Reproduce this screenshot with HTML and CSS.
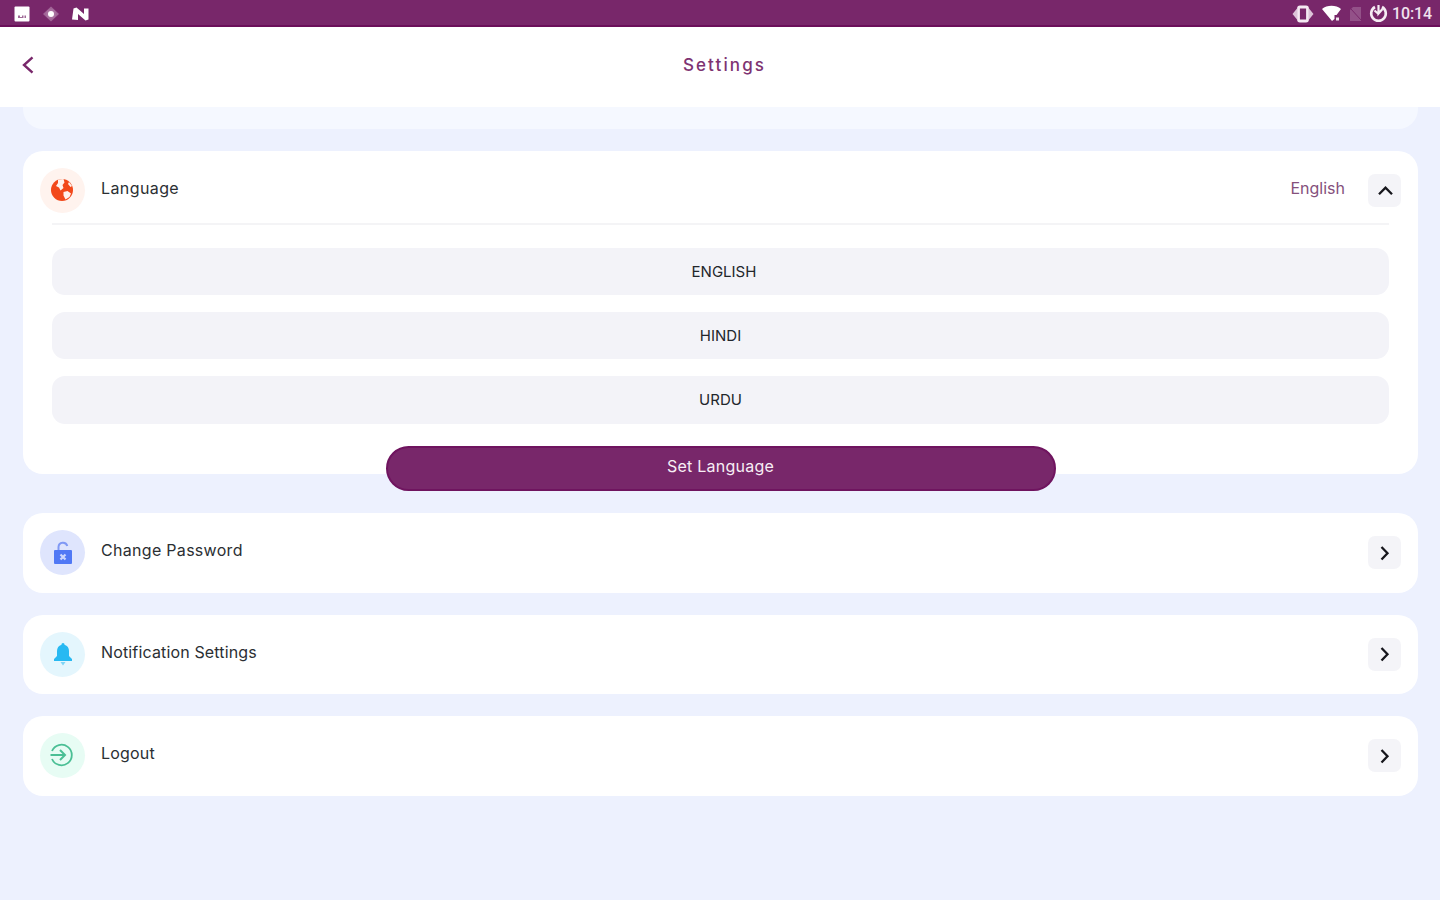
FILE: index.html
```html
<!DOCTYPE html>
<html lang="en">
<head>
    <meta charset="UTF-8">
    <meta name="viewport" content="width=device-width, initial-scale=1.0">
    <title>Settings</title>
    <link rel="stylesheet" href="styles.css">
</head>
<body>
    <!-- Status bar -->
    <div class="status-bar">
        <div class="status-left">
            <svg width="16" height="16" viewBox="0 0 16 16">
                <rect x="0.5" y="0.5" width="15" height="15" rx="1" fill="#fff"/>
                <path d="M4 12V9.500h2V11h2V9.500h1.500V12zM10.500 9.500h1.500V12h-1.500z" fill="#a06a97"/>
            </svg>
            <svg width="18" height="16" viewBox="0 0 18 16">
                <path d="M9 0.500L17 8 9 15.500 1 8z" fill="#c9a3c3" opacity="0.5"/>
                <circle cx="9" cy="8" r="5" fill="#a8709f"/>
                <circle cx="9" cy="8" r="3" fill="#fff"/>
            </svg>
            <svg width="18" height="16" viewBox="0 0 18 16">
                <path d="M0 13.500L1.500 2.500 4.500 1.500 12 8V2.500h4.500v11l-3 1L6 8v6z" fill="#fff"/>
            </svg>
        </div>
        <div class="status-right">
            <svg class="vibrate" width="22" height="18" viewBox="0 0 22 18">
                <path d="M5 3.500v11L.5 9zM17 3.500v11L21.500 9z" fill="#dcc3d8"/>
                <rect x="6.500" y="2" width="9" height="14" rx="1.500" fill="none" stroke="#f4e9f2" stroke-width="2.800"/>
            </svg>
            <svg class="wifi" width="21" height="18" viewBox="0 0 21 18">
                <path d="M1 4C6-.3 15-.3 20 4l-4.500 6h-2v4l-2.500 2z" fill="#fff"/>
                <rect x="15" y="12.500" width="3" height="3" fill="#f0e2ee"/>
            </svg>
            <svg class="sim" width="13" height="16" viewBox="0 0 13 16">
                <path d="M4 1h8v14H1V4z" fill="#935188"/>
                <path d="M2 3l10 11" stroke="#78276a" stroke-width="1"/>
            </svg>
            <svg class="sync" width="19" height="19" viewBox="0 0 19 19">
                <path d="M6 3A7.300 7.300 0 1 0 13 3" fill="none" stroke="#f6edf4" stroke-width="2.600"/>
                <path d="M9.500 1v8.500l4-4.500M5.500 6.500l3.500 3" fill="none" stroke="#f6edf4" stroke-width="2.200"/>
            </svg>
            <span class="clock">10:14</span>
        </div>
    </div>

    <!-- Header -->
    <header class="header">
        <svg class="back-icon" width="14" height="20" viewBox="0 0 14 20">
            <path d="M11.500 2.300L3 10l8.500 7.700" fill="none" stroke="#78276a" stroke-width="2.400"/>
        </svg>
        <h1 class="header-title">Settings</h1>
    </header>

    <main class="content">
        <div class="card-end"></div>

        <!-- Language -->
        <section class="card language-card">
            <div class="row">
                <span class="icon icon-language">
                    <svg width="24" height="24" viewBox="0 0 24 24">
                        <circle cx="12" cy="12" r="11" fill="#f2491b"/>
                        <path d="M8 1.500L13.500 1l1 3.500-2 2.500 1 3-3 2.500L9 9.500 6 8l2-3zM13.500 14l4-1 3.500 2.500-1.500 3.500-4 2.500-2-4zM19 4l3 4-1.500 1L18 6z" fill="#fff2ed"/>
                    </svg>
                </span>
                <span class="label label-language">Language</span>
                <span class="value">English</span>
                <span class="toggle">
                    <svg width="20" height="20" viewBox="0 0 20 20"><path d="M4 13.200l6.500-6.500 6.500 6.500" fill="none" stroke="#16161c" stroke-width="2.300"/></svg>
                </span>
            </div>
            <div class="options">
                <div class="option option-english">ENGLISH</div>
                <div class="option">HINDI</div>
                <div class="option">URDU</div>
            </div>
            <button class="set-button">Set Language</button>
        </section>

        <!-- Other settings -->
        <section class="card row">
            <span class="icon icon-password">
                <svg width="20" height="24" viewBox="0 0 20 24">
                    <path d="M5.500 9V6a4.500 4.500 0 0 1 8.800-1" fill="none" stroke="#8099f5" stroke-width="2"/>
                    <rect x="1" y="9" width="18" height="14" rx="1" fill="#5078f5"/>
                    <path d="M7.500 13.500l5 5M12.500 13.500l-5 5" stroke="#cbd6fd" stroke-width="2.200"/>
                </svg>
            </span>
            <span class="label label-password">Change Password</span>
            <span class="toggle">
                <svg width="20" height="20" viewBox="0 0 20 20"><path d="M6.500 4l6 6.200-6 6.300" fill="none" stroke="#16161c" stroke-width="2.300"/></svg>
            </span>
        </section>
        <section class="card row">
            <span class="icon icon-notification">
                <svg width="20" height="24" viewBox="0 0 20 24">
                    <path d="M10 1c1 0 1.500.8 1.500 1.700C14.500 3.500 16 6 16 9v5l3 3v2H1v-2l3-3V9c0-3 1.500-5.500 4.500-6.300C8.500 1.800 9 1 10 1z" fill="#27b9f2"/>
                    <path d="M7.500 20h5L10 23.500z" fill="#7fd5f6"/>
                </svg>
            </span>
            <span class="label label-notification">Notification Settings</span>
            <span class="toggle">
                <svg width="20" height="20" viewBox="0 0 20 20"><path d="M6.500 4l6 6.200-6 6.300" fill="none" stroke="#16161c" stroke-width="2.300"/></svg>
            </span>
        </section>
        <section class="card row">
            <span class="icon icon-logout">
                <svg width="24" height="24" viewBox="0 0 24 24" fill="none" stroke="#4bbf95">
                    <path d="M2 8A10.300 10.300 0 1 1 2 16" stroke-width="1.800"/>
                    <path d="M.5 12h14M10 7l5 5-5 5" stroke-width="2"/>
                </svg>
            </span>
            <span class="label label-logout">Logout</span>
            <span class="toggle">
                <svg width="20" height="20" viewBox="0 0 20 20"><path d="M6.500 4l6 6.200-6 6.300" fill="none" stroke="#16161c" stroke-width="2.300"/></svg>
            </span>
        </section>
    </main>
</body>
</html>
```
FILE: styles.css
```css
/* Reset */
* {
    box-sizing: border-box;
}

body {
    margin: 0;
    height: 100vh;
    overflow: hidden;
    background: #edf1fe;
    color: #2b2f33;
    font-family: Inter, "Open Sans", sans-serif;
}

svg {
    display: block;
    flex: none;
}

/* Status bar */
.status-bar {
    display: flex;
    justify-content: space-between;
    align-items: center;
    height: 27px;
    padding: 0 8px 0 14px;
    background: #78276a;
    border-bottom: 2px solid #6b0f5a;
}

.status-left {
    display: flex;
    gap: 12px;
    padding-top: 3px;
}

.status-right {
    display: flex;
    align-items: center;
    padding-top: 2px;
}

.wifi {
    margin-left: 7px;
}

.sim {
    margin-left: 7px;
}

.sync {
    margin-left: 7px;
}

.clock {
    margin-left: 4px;
    color: #f0e2ee;
    font-family: Roboto, sans-serif;
    font-size: 16px;
    font-weight: 500;
    line-height: 20px;
    letter-spacing: -0.1px;
}

/* Header */
.header {
    display: flex;
    align-items: center;
    height: 80px;
    padding: 0 21px;
    background: #fff;
}

.back-icon {
    margin-top: -4px;
}

.header-title {
    flex: 1;
    margin: -4px 5px 0 0;
    text-align: center;
    color: #7e3372;
    font-size: 17px;
    font-weight: 500;
    letter-spacing: 2.1px;
}

/* Cards */
.content {
    display: flex;
    flex-direction: column;
    gap: 22px;
    padding: 0 22px 0 23px;
}

.card-end {
    height: 22px;
    background: #f5f8ff;
    border-radius: 0 0 20px 20px;
}

.card {
    background: #fff;
    border-radius: 20px;
}

.row {
    display: flex;
    align-items: center;
    height: 79.500px;
    padding: 0 17px;
}

.icon {
    display: flex;
    justify-content: center;
    align-items: center;
    width: 45px;
    height: 45px;
    border-radius: 50%;
}

.icon-language {
    background: #fff3ee;
}

.icon-language svg,
.icon-logout svg {
    margin: 0 1px 1px 0;
}

.icon-password {
    background: #dfe5fd;
}

.icon-notification {
    background: #e4f6fd;
}

.icon-logout {
    background: #e7fcf4;
}

.label {
    flex: 1;
    margin: -5px 0 0 16px;
    font-size: 16px;
}

.label-language {
    letter-spacing: 0.4px;
}

.label-password {
    letter-spacing: 0.3px;
}

.label-notification {
    letter-spacing: 0.15px;
}

.label-logout {
    letter-spacing: 0.2px;
}

.value {
    margin: -5px 23px 0 0;
    color: #85507c;
    font-size: 16px;
}

.toggle {
    display: flex;
    justify-content: center;
    align-items: center;
    width: 33px;
    height: 33px;
    border-radius: 7px;
    background: #f4f4f8;
}

/* Language card */
.language-card {
    height: 323px;
    margin-bottom: 17px;
}

.options {
    display: flex;
    flex-direction: column;
    gap: 17px;
    margin: -7.500px 29px 0;
    padding-top: 23px;
    border-top: 2px solid #f4f4f6;
}

.option {
    height: 47.200px;
    border-radius: 13px;
    background: #f3f3f8;
    color: #22262b;
    font-size: 15px;
    line-height: 47px;
    text-align: center;
}

.option-english {
    padding-left: 7px;
}

.set-button {
    display: block;
    width: 670px;
    height: 45px;
    margin: 22px auto 0;
    padding: 0 0 4px;
    border: 2px solid #6f145f;
    border-radius: 23px;
    background: #78276a;
    color: #f7eef5;
    font-family: inherit;
    font-size: 16px;
    letter-spacing: 0.25px;
}
```
